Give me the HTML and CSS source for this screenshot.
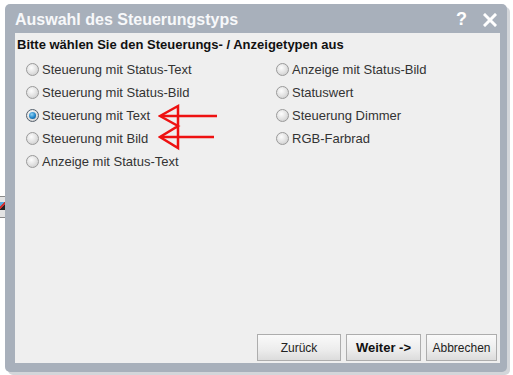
FILE: index.html
```html
<!DOCTYPE html>
<html lang="de">
<head>
<meta charset="utf-8">
<title>Auswahl des Steuerungstyps</title>
<link rel="stylesheet" href="styles.css">
</head>
<body>
<div class="stage">
  <div class="edge-btn"><span class="edge-icon"></span></div>
  <div class="dialog">
    <div class="titlebar">
      <span class="title">Auswahl des Steuerungstyps</span>
      <div class="tools">
        <span class="help">?</span>
        <svg class="close" width="14" height="14" viewBox="0 0 14 14"><path d="M2 2 L12 12 M12 2 L2 12" stroke="#fff" stroke-width="3" stroke-linecap="square"/></svg>
      </div>
    </div>
    <div class="content">
      <div class="heading">Bitte wählen Sie den Steuerungs- / Anzeigetypen aus</div>
      <div class="options">
        <div class="col">
          <label class="opt"><span class="radio"></span>Steuerung mit Status-Text</label>
          <label class="opt"><span class="radio"></span>Steuerung mit Status-Bild</label>
          <label class="opt"><span class="radio checked"></span>Steuerung mit Text</label>
          <label class="opt"><span class="radio"></span>Steuerung mit Bild</label>
          <label class="opt"><span class="radio"></span>Anzeige mit Status-Text</label>
        </div>
        <div class="col">
          <label class="opt"><span class="radio"></span>Anzeige mit Status-Bild</label>
          <label class="opt"><span class="radio"></span>Statuswert</label>
          <label class="opt"><span class="radio"></span>Steuerung Dimmer</label>
          <label class="opt"><span class="radio"></span>RGB-Farbrad</label>
        </div>
      </div>
      <svg class="arrows" width="70" height="50" viewBox="0 0 70 50">
        <g stroke="#ee1111" stroke-width="2.5" fill="none" stroke-linejoin="miter">
          <path d="M20 3 L2 13 L20 23 L2 34 L20 45 Z"/>
          <path d="M4 13 H59"/>
          <path d="M4 34 H56"/>
        </g>
      </svg>
      <div class="footer">
        <button class="btn back">Zurück</button>
        <button class="btn next">Weiter -&gt;</button>
        <button class="btn cancel">Abbrechen</button>
      </div>
    </div>
  </div>
</div>
</body>
</html>
```
FILE: styles.css
```css
html, body {
  margin: 0;
  padding: 0;
  background: #ffffff;
}
body {
  width: 513px;
  height: 375px;
  overflow: hidden;
  font-family: "Liberation Sans", Arial, sans-serif;
}
.stage {
  position: relative;
  padding: 4px 0 0 5px;
}
.edge-btn {
  position: absolute;
  left: -14px;
  top: 196px;
  width: 18px;
  height: 20px;
  border: 1px solid #8a8a8a;
  background: #e4e4e4;
}
.edge-icon {
  position: absolute;
  right: 0;
  top: 5px;
  width: 6px;
  height: 8px;
  background: linear-gradient(135deg, #5ad 0 40%, #c33 40% 60%, #222 60%);
}
.dialog {
  position: relative;
  width: 502px;
  height: 368px;
  background: #a8b0bb;
  border-radius: 5px;
  display: flex;
  flex-direction: column;
  box-shadow: 3px 3px 0 #d3d6da;
}
.titlebar {
  height: 29px;
  display: flex;
  align-items: center;
  padding: 0 10px 0 10px;
}
.title {
  flex: 1;
  color: #f7f8fa;
  font-weight: bold;
  font-size: 16px;
  padding-top: 3px;
}
.tools {
  display: flex;
  align-items: center;
  gap: 16px;
  padding-top: 2px;
}
.help {
  color: #fff;
  font-weight: bold;
  font-size: 18px;
}
.close {
  display: block;
}
.content {
  position: relative;
  flex: 1;
  margin: 0 7px 9px 10px;
  background: #efefef;
  display: flex;
  flex-direction: column;
  padding: 4px 3px 2px 2px;
}
.heading {
  font-weight: bold;
  font-size: 13px;
  line-height: 16px;
  color: #111;
}
.options {
  display: flex;
  padding: 5px 0 0 9px;
}
.col {
  display: flex;
  flex-direction: column;
}
.col:first-child {
  width: 250px;
}
.opt {
  height: 23px;
  display: flex;
  align-items: center;
  font-size: 13px;
  color: #333;
}
.radio {
  width: 11px;
  height: 11px;
  border-radius: 50%;
  border: 1px solid #9a9a9a;
  background: radial-gradient(circle at 40% 35%, #fdfdfd 0%, #e0e0e0 55%, #c4c4c4 100%);
  margin-right: 3px;
  box-sizing: content-box;
  position: relative;
}
.radio.checked {
  border-color: #55606c;
}
.radio.checked::after {
  content: "";
  position: absolute;
  left: 2px;
  top: 2px;
  width: 7px;
  height: 7px;
  border-radius: 50%;
  background: radial-gradient(circle at 40% 35%, #8fd2f5 0%, #1f84c8 55%, #0c3e6e 100%);
}
.arrows {
  position: absolute;
  left: 143px;
  top: 70px;
}
.footer {
  margin-top: auto;
  display: flex;
  justify-content: flex-end;
  gap: 5px;
}
.btn {
  height: 27px;
  border: 1px solid #adadad;
  background: linear-gradient(180deg, #fafafa 0%, #ececec 60%, #dcdcdc 100%);
  font-family: "Liberation Sans", Tahoma, sans-serif;
  font-size: 12px;
  color: #222;
  padding: 0;
}
.back { width: 84px; }
.next { width: 75px; font-weight: bold; font-size: 13px; color: #111; }
.cancel { width: 71px; }
```
